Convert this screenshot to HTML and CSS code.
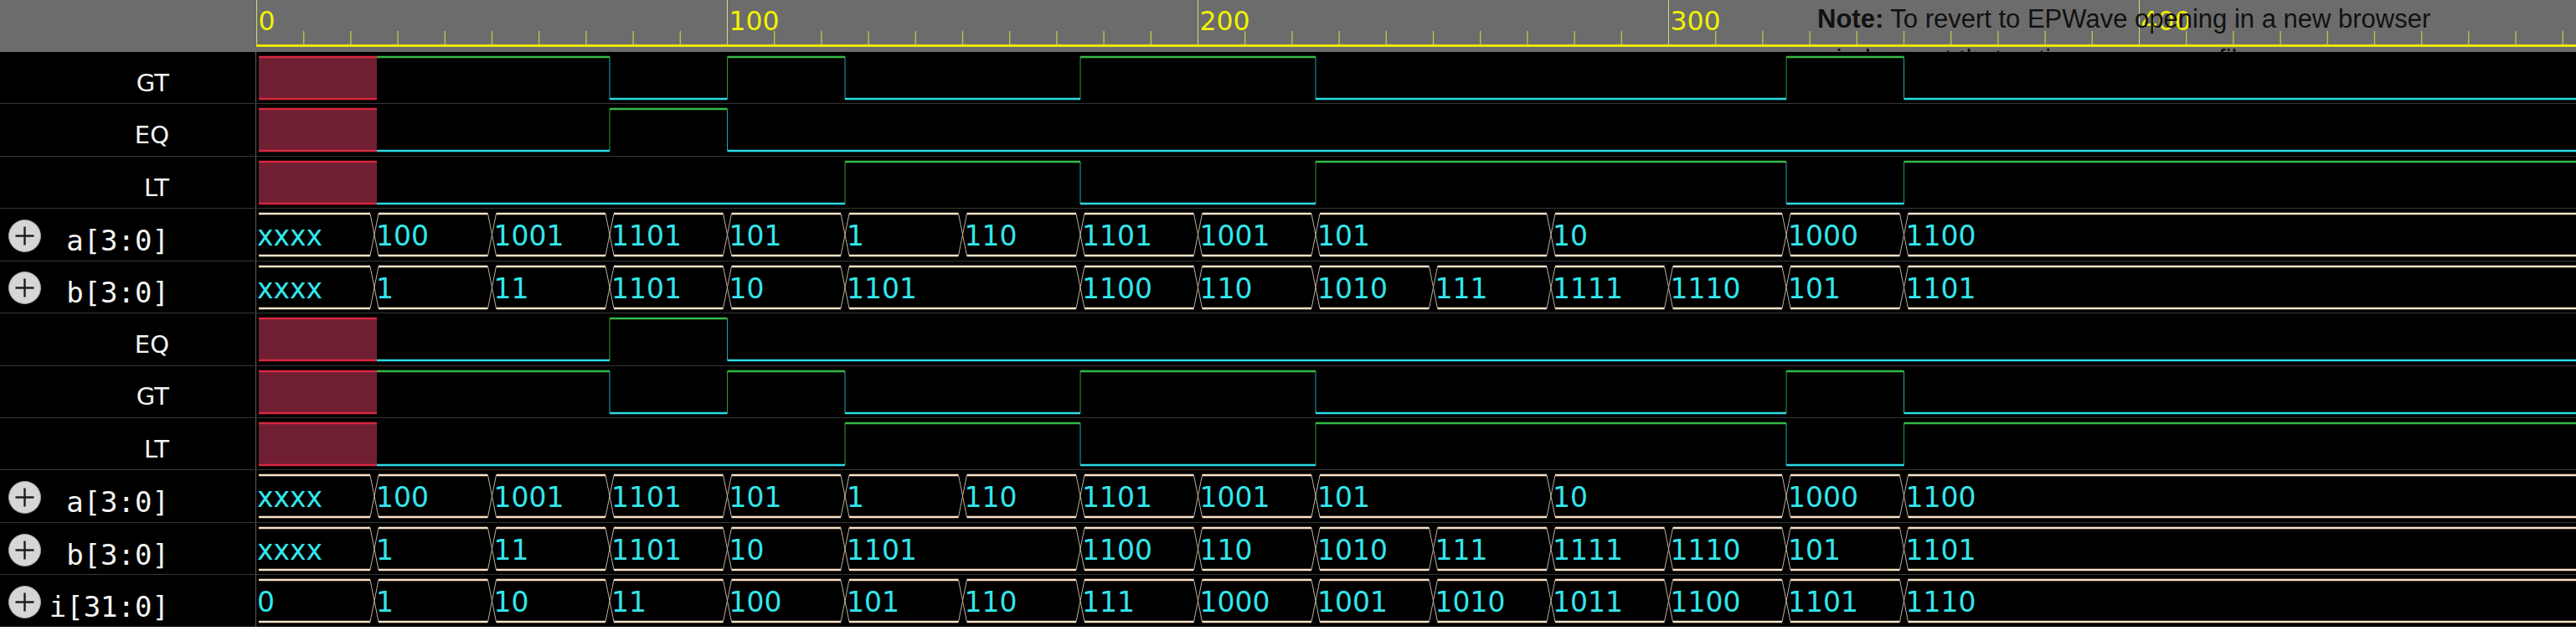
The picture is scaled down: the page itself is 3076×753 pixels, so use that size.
FILE: index.html
```html
<!DOCTYPE html>
<html lang="en">
<head>
<meta charset="utf-8">
<title>EPWave</title>
<link rel="stylesheet" href="styles.css">
</head>
<body>
<div class="app">
  <div class="header">
    <div class="header-spacer"></div>
    <svg class="axis" width="2770" height="62">
      <rect class="axis-line" x="0" y="53" width="2770" height="3"/>
      <path class="tick-minor" d="M56.7 37V53M112.9 37V53M169.1 37V53M225.3 37V53M281.5 37V53M337.7 37V53M393.9 37V53M450.1 37V53M506.3 37V53M618.7 37V53M674.9 37V53M731.1 37V53M787.3 37V53M843.5 37V53M899.7 37V53M955.9 37V53M1012.1 37V53M1068.3 37V53M1180.7 37V53M1236.9 37V53M1293.1 37V53M1349.3 37V53M1405.5 37V53M1461.7 37V53M1517.9 37V53M1574.1 37V53M1630.3 37V53M1742.7 37V53M1798.9 37V53M1855.1 37V53M1911.3 37V53M1967.5 37V53M2023.7 37V53M2079.9 37V53M2136.1 37V53M2192.3 37V53M2304.7 37V53M2360.9 37V53M2417.1 37V53M2473.3 37V53M2529.5 37V53M2585.7 37V53M2641.9 37V53M2698.1 37V53M2754.3 37V53"/>
      <path class="tick-major" d="M0.5 0V53M562.5 0V53M1124.5 0V53M1686.5 0V53M2248.5 0V53"/>
      <text class="tick-label" x="2.5" y="36">0</text>
      <text class="tick-label" x="564.5" y="36">100</text>
      <text class="tick-label" x="1126.5" y="36">200</text>
      <text class="tick-label" x="1688.5" y="36">300</text>
      <text class="tick-label" x="2250.5" y="36">400</text>
    </svg>
  </div>

  <div class="rows">
    <!-- GT -->
    <div class="row">
      <div class="label"><span class="name sig">GT</span></div>
      <svg class="wave" width="2770" height="61">
        <rect class="xfill" x="3" y="5" width="141" height="52"/>
        <path class="xline" d="M3 6H144M3 56H144"/>
        <path class="edge-hi" d="M562.5 6V56M984 6V56M1827 6V56"/>
        <path class="edge-lo" d="M422 6V56M703 6V56M1265 6V56M1967.5 6V56"/>
        <path class="hi" d="M144 6H422M562.5 6H703M984 6H1265M1827 6H1967.5"/>
        <path class="lo" d="M422 56H562.5M703 56H984M1265 56H1827M1967.5 56H2770"/>
      </svg>
    </div>
    <!-- EQ -->
    <div class="row">
      <div class="label"><span class="name sig">EQ</span></div>
      <svg class="wave" width="2770" height="61">
        <rect class="xfill" x="3" y="5" width="141" height="52"/>
        <path class="xline" d="M3 6H144M3 56H144"/>
        <path class="edge-hi" d="M422 6V56"/>
        <path class="edge-lo" d="M562.5 6V56"/>
        <path class="hi" d="M422 6H562.5"/>
        <path class="lo" d="M144 56H422M562.5 56H2770"/>
      </svg>
    </div>
    <!-- LT -->
    <div class="row">
      <div class="label"><span class="name sig">LT</span></div>
      <svg class="wave" width="2770" height="61">
        <rect class="xfill" x="3" y="5" width="141" height="52"/>
        <path class="xline" d="M3 6H144M3 56H144"/>
        <path class="edge-hi" d="M703 6V56M1265 6V56M1967.5 6V56"/>
        <path class="edge-lo" d="M984 6V56M1827 6V56"/>
        <path class="hi" d="M703 6H984M1265 6H1827M1967.5 6H2770"/>
        <path class="lo" d="M144 56H703M984 56H1265M1827 56H1967.5"/>
      </svg>
    </div>
    <!-- a[3:0] -->
    <div class="row">
      <div class="label">
        <svg class="icon" width="40" height="40" viewBox="0 0 40 40"><circle class="icon-disc" cx="19.5" cy="19.5" r="19"/><path class="icon-plus" d="M8.5 19.5H30.5M19.5 8.5V30.5"/></svg>
        <span class="name bus">a[3:0]</span>
      </div>
      <svg class="wave" width="2770" height="61">
        <path class="busline" d="M3 6H136M146 6H276.5M286.5 6H417M427 6H557.5M567.5 6H698M708 6H838.5M848.5 6H979M989 6H1119.5M1129.5 6H1260M1270 6H1541M1551 6H1822M1832 6H1962.5M1972.5 6H2770"/>
        <path class="busline" transform="translate(0 50)" d="M3 6H136M146 6H276.5M286.5 6H417M427 6H557.5M567.5 6H698M708 6H838.5M848.5 6H979M989 6H1119.5M1129.5 6H1260M1270 6H1541M1551 6H1822M1832 6H1962.5M1972.5 6H2770"/>
        <path class="cross" d="M136 6L146 56M136 56L146 6M276.5 6L286.5 56M276.5 56L286.5 6M417 6L427 56M417 56L427 6M557.5 6L567.5 56M557.5 56L567.5 6M698 6L708 56M698 56L708 6M838.5 6L848.5 56M838.5 56L848.5 6M979 6L989 56M979 56L989 6M1119.5 6L1129.5 56M1119.5 56L1129.5 6M1260 6L1270 56M1260 56L1270 6M1541 6L1551 56M1541 56L1551 6M1822 6L1832 56M1822 56L1832 6M1962.5 6L1972.5 56M1962.5 56L1972.5 6"/>
        <text class="val" x="1" y="43.5">xxxx</text>
        <text class="val" x="143" y="43.5">100</text>
        <text class="val" x="283.5" y="43.5">1001</text>
        <text class="val" x="424" y="43.5">1101</text>
        <text class="val" x="564.5" y="43.5">101</text>
        <text class="val" x="705" y="43.5">1</text>
        <text class="val" x="845.5" y="43.5">110</text>
        <text class="val" x="986" y="43.5">1101</text>
        <text class="val" x="1126.5" y="43.5">1001</text>
        <text class="val" x="1267" y="43.5">101</text>
        <text class="val" x="1548" y="43.5">10</text>
        <text class="val" x="1829" y="43.5">1000</text>
        <text class="val" x="1969.5" y="43.5">1100</text>
      </svg>
    </div>
    <!-- b[3:0] -->
    <div class="row">
      <div class="label">
        <svg class="icon" width="40" height="40" viewBox="0 0 40 40"><circle class="icon-disc" cx="19.5" cy="19.5" r="19"/><path class="icon-plus" d="M8.5 19.5H30.5M19.5 8.5V30.5"/></svg>
        <span class="name bus">b[3:0]</span>
      </div>
      <svg class="wave" width="2770" height="61">
        <path class="busline" d="M3 6H136M146 6H276.5M286.5 6H417M427 6H557.5M567.5 6H698M708 6H979M989 6H1119.5M1129.5 6H1260M1270 6H1400.5M1410.5 6H1541M1551 6H1681.5M1691.5 6H1822M1832 6H1962.5M1972.5 6H2770"/>
        <path class="busline" transform="translate(0 50)" d="M3 6H136M146 6H276.5M286.5 6H417M427 6H557.5M567.5 6H698M708 6H979M989 6H1119.5M1129.5 6H1260M1270 6H1400.5M1410.5 6H1541M1551 6H1681.5M1691.5 6H1822M1832 6H1962.5M1972.5 6H2770"/>
        <path class="cross" d="M136 6L146 56M136 56L146 6M276.5 6L286.5 56M276.5 56L286.5 6M417 6L427 56M417 56L427 6M557.5 6L567.5 56M557.5 56L567.5 6M698 6L708 56M698 56L708 6M979 6L989 56M979 56L989 6M1119.5 6L1129.5 56M1119.5 56L1129.5 6M1260 6L1270 56M1260 56L1270 6M1400.5 6L1410.5 56M1400.5 56L1410.5 6M1541 6L1551 56M1541 56L1551 6M1681.5 6L1691.5 56M1681.5 56L1691.5 6M1822 6L1832 56M1822 56L1832 6M1962.5 6L1972.5 56M1962.5 56L1972.5 6"/>
        <text class="val" x="1" y="43.5">xxxx</text>
        <text class="val" x="143" y="43.5">1</text>
        <text class="val" x="283.5" y="43.5">11</text>
        <text class="val" x="424" y="43.5">1101</text>
        <text class="val" x="564.5" y="43.5">10</text>
        <text class="val" x="705" y="43.5">1101</text>
        <text class="val" x="986" y="43.5">1100</text>
        <text class="val" x="1126.5" y="43.5">110</text>
        <text class="val" x="1267" y="43.5">1010</text>
        <text class="val" x="1407.5" y="43.5">111</text>
        <text class="val" x="1548" y="43.5">1111</text>
        <text class="val" x="1688.5" y="43.5">1110</text>
        <text class="val" x="1829" y="43.5">101</text>
        <text class="val" x="1969.5" y="43.5">1101</text>
      </svg>
    </div>
    <!-- EQ -->
    <div class="row">
      <div class="label"><span class="name sig">EQ</span></div>
      <svg class="wave" width="2770" height="61">
        <rect class="xfill" x="3" y="5" width="141" height="52"/>
        <path class="xline" d="M3 6H144M3 56H144"/>
        <path class="edge-hi" d="M422 6V56"/>
        <path class="edge-lo" d="M562.5 6V56"/>
        <path class="hi" d="M422 6H562.5"/>
        <path class="lo" d="M144 56H422M562.5 56H2770"/>
      </svg>
    </div>
    <!-- GT -->
    <div class="row">
      <div class="label"><span class="name sig">GT</span></div>
      <svg class="wave" width="2770" height="61">
        <rect class="xfill" x="3" y="5" width="141" height="52"/>
        <path class="xline" d="M3 6H144M3 56H144"/>
        <path class="edge-hi" d="M562.5 6V56M984 6V56M1827 6V56"/>
        <path class="edge-lo" d="M422 6V56M703 6V56M1265 6V56M1967.5 6V56"/>
        <path class="hi" d="M144 6H422M562.5 6H703M984 6H1265M1827 6H1967.5"/>
        <path class="lo" d="M422 56H562.5M703 56H984M1265 56H1827M1967.5 56H2770"/>
      </svg>
    </div>
    <!-- LT -->
    <div class="row">
      <div class="label"><span class="name sig">LT</span></div>
      <svg class="wave" width="2770" height="61">
        <rect class="xfill" x="3" y="5" width="141" height="52"/>
        <path class="xline" d="M3 6H144M3 56H144"/>
        <path class="edge-hi" d="M703 6V56M1265 6V56M1967.5 6V56"/>
        <path class="edge-lo" d="M984 6V56M1827 6V56"/>
        <path class="hi" d="M703 6H984M1265 6H1827M1967.5 6H2770"/>
        <path class="lo" d="M144 56H703M984 56H1265M1827 56H1967.5"/>
      </svg>
    </div>
    <!-- a[3:0] -->
    <div class="row">
      <div class="label">
        <svg class="icon" width="40" height="40" viewBox="0 0 40 40"><circle class="icon-disc" cx="19.5" cy="19.5" r="19"/><path class="icon-plus" d="M8.5 19.5H30.5M19.5 8.5V30.5"/></svg>
        <span class="name bus">a[3:0]</span>
      </div>
      <svg class="wave" width="2770" height="61">
        <path class="busline" d="M3 6H136M146 6H276.5M286.5 6H417M427 6H557.5M567.5 6H698M708 6H838.5M848.5 6H979M989 6H1119.5M1129.5 6H1260M1270 6H1541M1551 6H1822M1832 6H1962.5M1972.5 6H2770"/>
        <path class="busline" transform="translate(0 50)" d="M3 6H136M146 6H276.5M286.5 6H417M427 6H557.5M567.5 6H698M708 6H838.5M848.5 6H979M989 6H1119.5M1129.5 6H1260M1270 6H1541M1551 6H1822M1832 6H1962.5M1972.5 6H2770"/>
        <path class="cross" d="M136 6L146 56M136 56L146 6M276.5 6L286.5 56M276.5 56L286.5 6M417 6L427 56M417 56L427 6M557.5 6L567.5 56M557.5 56L567.5 6M698 6L708 56M698 56L708 6M838.5 6L848.5 56M838.5 56L848.5 6M979 6L989 56M979 56L989 6M1119.5 6L1129.5 56M1119.5 56L1129.5 6M1260 6L1270 56M1260 56L1270 6M1541 6L1551 56M1541 56L1551 6M1822 6L1832 56M1822 56L1832 6M1962.5 6L1972.5 56M1962.5 56L1972.5 6"/>
        <text class="val" x="1" y="43.5">xxxx</text>
        <text class="val" x="143" y="43.5">100</text>
        <text class="val" x="283.5" y="43.5">1001</text>
        <text class="val" x="424" y="43.5">1101</text>
        <text class="val" x="564.5" y="43.5">101</text>
        <text class="val" x="705" y="43.5">1</text>
        <text class="val" x="845.5" y="43.5">110</text>
        <text class="val" x="986" y="43.5">1101</text>
        <text class="val" x="1126.5" y="43.5">1001</text>
        <text class="val" x="1267" y="43.5">101</text>
        <text class="val" x="1548" y="43.5">10</text>
        <text class="val" x="1829" y="43.5">1000</text>
        <text class="val" x="1969.5" y="43.5">1100</text>
      </svg>
    </div>
    <!-- b[3:0] -->
    <div class="row">
      <div class="label">
        <svg class="icon" width="40" height="40" viewBox="0 0 40 40"><circle class="icon-disc" cx="19.5" cy="19.5" r="19"/><path class="icon-plus" d="M8.5 19.5H30.5M19.5 8.5V30.5"/></svg>
        <span class="name bus">b[3:0]</span>
      </div>
      <svg class="wave" width="2770" height="61">
        <path class="busline" d="M3 6H136M146 6H276.5M286.5 6H417M427 6H557.5M567.5 6H698M708 6H979M989 6H1119.5M1129.5 6H1260M1270 6H1400.5M1410.5 6H1541M1551 6H1681.5M1691.5 6H1822M1832 6H1962.5M1972.5 6H2770"/>
        <path class="busline" transform="translate(0 50)" d="M3 6H136M146 6H276.5M286.5 6H417M427 6H557.5M567.5 6H698M708 6H979M989 6H1119.5M1129.5 6H1260M1270 6H1400.5M1410.5 6H1541M1551 6H1681.5M1691.5 6H1822M1832 6H1962.5M1972.5 6H2770"/>
        <path class="cross" d="M136 6L146 56M136 56L146 6M276.5 6L286.5 56M276.5 56L286.5 6M417 6L427 56M417 56L427 6M557.5 6L567.5 56M557.5 56L567.5 6M698 6L708 56M698 56L708 6M979 6L989 56M979 56L989 6M1119.5 6L1129.5 56M1119.5 56L1129.5 6M1260 6L1270 56M1260 56L1270 6M1400.5 6L1410.5 56M1400.5 56L1410.5 6M1541 6L1551 56M1541 56L1551 6M1681.5 6L1691.5 56M1681.5 56L1691.5 6M1822 6L1832 56M1822 56L1832 6M1962.5 6L1972.5 56M1962.5 56L1972.5 6"/>
        <text class="val" x="1" y="43.5">xxxx</text>
        <text class="val" x="143" y="43.5">1</text>
        <text class="val" x="283.5" y="43.5">11</text>
        <text class="val" x="424" y="43.5">1101</text>
        <text class="val" x="564.5" y="43.5">10</text>
        <text class="val" x="705" y="43.5">1101</text>
        <text class="val" x="986" y="43.5">1100</text>
        <text class="val" x="1126.5" y="43.5">110</text>
        <text class="val" x="1267" y="43.5">1010</text>
        <text class="val" x="1407.5" y="43.5">111</text>
        <text class="val" x="1548" y="43.5">1111</text>
        <text class="val" x="1688.5" y="43.5">1110</text>
        <text class="val" x="1829" y="43.5">101</text>
        <text class="val" x="1969.5" y="43.5">1101</text>
      </svg>
    </div>
    <!-- i[31:0] -->
    <div class="row">
      <div class="label">
        <svg class="icon" width="40" height="40" viewBox="0 0 40 40"><circle class="icon-disc" cx="19.5" cy="19.5" r="19"/><path class="icon-plus" d="M8.5 19.5H30.5M19.5 8.5V30.5"/></svg>
        <span class="name bus">i[31:0]</span>
      </div>
      <svg class="wave" width="2770" height="61">
        <path class="busline" d="M3 6H136M146 6H276.5M286.5 6H417M427 6H557.5M567.5 6H698M708 6H838.5M848.5 6H979M989 6H1119.5M1129.5 6H1260M1270 6H1400.5M1410.5 6H1541M1551 6H1681.5M1691.5 6H1822M1832 6H1962.5M1972.5 6H2770"/>
        <path class="busline" transform="translate(0 50)" d="M3 6H136M146 6H276.5M286.5 6H417M427 6H557.5M567.5 6H698M708 6H838.5M848.5 6H979M989 6H1119.5M1129.5 6H1260M1270 6H1400.5M1410.5 6H1541M1551 6H1681.5M1691.5 6H1822M1832 6H1962.5M1972.5 6H2770"/>
        <path class="cross" d="M136 6L146 56M136 56L146 6M276.5 6L286.5 56M276.5 56L286.5 6M417 6L427 56M417 56L427 6M557.5 6L567.5 56M557.5 56L567.5 6M698 6L708 56M698 56L708 6M838.5 6L848.5 56M838.5 56L848.5 6M979 6L989 56M979 56L989 6M1119.5 6L1129.5 56M1119.5 56L1129.5 6M1260 6L1270 56M1260 56L1270 6M1400.5 6L1410.5 56M1400.5 56L1410.5 6M1541 6L1551 56M1541 56L1551 6M1681.5 6L1691.5 56M1681.5 56L1691.5 6M1822 6L1832 56M1822 56L1832 6M1962.5 6L1972.5 56M1962.5 56L1972.5 6"/>
        <text class="val" x="1" y="43.5">0</text>
        <text class="val" x="143" y="43.5">1</text>
        <text class="val" x="283.5" y="43.5">10</text>
        <text class="val" x="424" y="43.5">11</text>
        <text class="val" x="564.5" y="43.5">100</text>
        <text class="val" x="705" y="43.5">101</text>
        <text class="val" x="845.5" y="43.5">110</text>
        <text class="val" x="986" y="43.5">111</text>
        <text class="val" x="1126.5" y="43.5">1000</text>
        <text class="val" x="1267" y="43.5">1001</text>
        <text class="val" x="1407.5" y="43.5">1010</text>
        <text class="val" x="1548" y="43.5">1011</text>
        <text class="val" x="1688.5" y="43.5">1100</text>
        <text class="val" x="1829" y="43.5">1101</text>
        <text class="val" x="1969.5" y="43.5">1110</text>
      </svg>
    </div>
  </div>

  <div class="note"><b>Note:</b> To revert to EPWave opening in a new browser window, set that option on your profile page.</div>
</div>
</body>
</html>
```

FILE: styles.css
```css
html, body {
  margin: 0;
  padding: 0;
  background: #ffffff;
}

.app {
  position: relative;
  width: 3076px;
  height: 748px;
  overflow: hidden;
  background: #000000;
}

/* ---------- header / time axis ---------- */
.header {
  display: grid;
  grid-template-columns: 306px 2770px;
  height: 62px;
  background: #6c6c6c;
}

.axis {
  display: block;
}

.axis-line {
  fill: #e8e800;
}

.tick-minor {
  fill: none;
  stroke: #c4c44a;
  stroke-width: 1.3;
}

.tick-major {
  fill: none;
  stroke: #d8d880;
  stroke-width: 1;
}

.tick-label {
  font-family: "DejaVu Sans", sans-serif;
  font-size: 31.5px;
  fill: #f2f200;
}

/* ---------- signal rows ---------- */
.rows {
  display: flex;
  flex-direction: column;
}

.row {
  display: grid;
  grid-template-columns: 306px 2770px;
  height: 62.43px;
  flex: none;
  box-sizing: border-box;
  border-bottom: 1px solid #353535;
}

.label {
  display: flex;
  align-items: center;
  padding: 0 103px 0 10px;
  border-right: 1px solid #5e5e5e;
  box-sizing: border-box;
  color: #f4f4f4;
  white-space: nowrap;
}

.name {
  margin-left: auto;
  line-height: normal;
}

.name.sig {
  font-family: "DejaVu Sans", sans-serif;
  font-size: 29px;
  padding-top: 12px;
}

.name.bus {
  font-family: "DejaVu Sans Mono", monospace;
  font-size: 34px;
  padding-top: 14px;
}

.icon {
  display: block;
  flex: none;
  margin-top: 4px;
}

.icon-disc {
  fill: #d6d6d6;
  stroke: #a0a0a0;
  stroke-width: 1;
}

.icon-plus {
  fill: none;
  stroke: #1e1e1e;
  stroke-width: 2.4;
}

.wave {
  display: block;
  overflow: visible;
}

/* binary traces */
.hi {
  fill: none;
  stroke: #35b845;
  stroke-width: 2.6;
}

.lo {
  fill: none;
  stroke: #2cdbe6;
  stroke-width: 2.6;
}

.edge-hi {
  fill: none;
  stroke: #2a9a3a;
  stroke-width: 1;
}

.edge-lo {
  fill: none;
  stroke: #1fa6b0;
  stroke-width: 1;
}

.xfill {
  fill: #701f33;
}

.xline {
  fill: none;
  stroke: #d6283f;
  stroke-width: 2.6;
}

/* bus traces */
.busline {
  fill: none;
  stroke: #fbe2c8;
  stroke-width: 2.6;
}

.cross {
  fill: none;
  stroke: #bfae9c;
  stroke-width: 1;
}

.val {
  font-family: "DejaVu Sans", sans-serif;
  font-size: 33px;
  fill: #33e6ec;
}

/* ---------- overlay note ---------- */
.note {
  position: absolute;
  top: -1.5px;
  left: 2170px;
  width: 780px;
  height: 63.5px;
  overflow: hidden;
  font-family: "Liberation Sans", Arial, sans-serif;
  font-size: 31px;
  line-height: 48px;
  color: #111111;
}

.note b {
  font-weight: 700;
}
```
